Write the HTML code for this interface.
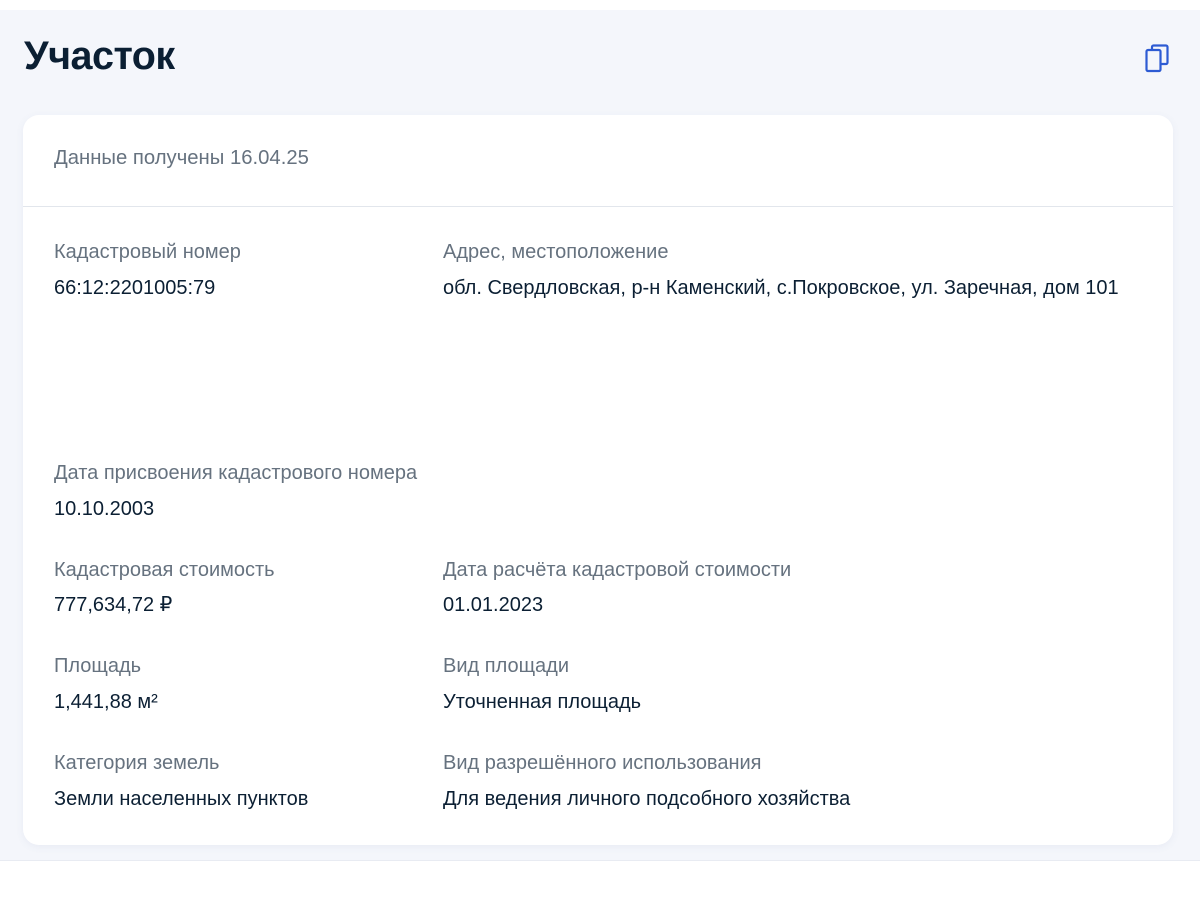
<!DOCTYPE html>
<html><head><meta charset="utf-8"><style>
html,body{margin:0;padding:0;background:#fff;width:1200px;height:900px;overflow:hidden}
body{font-family:"Liberation Sans","DejaVu Sans",sans-serif;position:relative}
.bg{position:absolute;left:0;top:10px;width:1200px;height:850px;background:#f4f6fb;border-bottom:1px solid #e8ebf2}
h1{position:absolute;left:24px;top:33px;margin:0;font-size:39.5px;font-weight:bold;color:#0b1f33;letter-spacing:-0.5px;line-height:46px}
.card{position:absolute;left:23px;top:115px;width:1150px;height:730px;background:#fff;border-radius:16px;box-shadow:0 2px 8px rgba(100,120,160,0.08)}
.hdr{position:absolute;left:31px;top:32px;font-size:20.3px;color:#66727f}
.div{position:absolute;left:0;right:0;top:91px;height:1px;background:#e2e6ec}
.t{position:absolute;font-size:20px;line-height:24px;white-space:nowrap}
.l{color:#66727f}.v{color:#0b1f33}
svg{position:absolute;left:1140px;top:40px}
</style></head><body>
<div class="bg"></div>
<h1>Участок</h1>
<svg width="34" height="36" viewBox="0 0 34 36" fill="none" stroke="#2d5bd3" stroke-width="2.2"><rect x="6.5" y="10" width="14" height="21" rx="1.5"/><path d="M12 10V7a1.5 1.5 0 0 1 1.5-1.5H26a1.5 1.5 0 0 1 1.5 1.5v15.5a1.5 1.5 0 0 1-1.5 1.5H20.5"/></svg>
<div class="card">
<div class="hdr">Данные получены 16.04.25</div>
<div class="div"></div>
</div>
<div class="t l" style="left:54px;top:240px">Кадастровый номер</div>
<div class="t v" style="left:54px;top:276px">66:12:2201005:79</div>
<div class="t l" style="left:443px;top:240px">Адрес, местоположение</div>
<div class="t v" style="left:443px;top:276px">обл. Свердловская, р-н Каменский, с.Покровское, ул. Заречная, дом 101</div>
<div class="t l" style="left:54px;top:461px">Дата присвоения кадастрового номера</div>
<div class="t v" style="left:54px;top:497px">10.10.2003</div>
<div class="t l" style="left:54px;top:558px">Кадастровая стоимость</div>
<div class="t v" style="left:54px;top:593px">777,634,72 ₽</div>
<div class="t l" style="left:443px;top:558px">Дата расчёта кадастровой стоимости</div>
<div class="t v" style="left:443px;top:593px">01.01.2023</div>
<div class="t l" style="left:54px;top:654px">Площадь</div>
<div class="t v" style="left:54px;top:690px">1,441,88 м²</div>
<div class="t l" style="left:443px;top:654px">Вид площади</div>
<div class="t v" style="left:443px;top:690px">Уточненная площадь</div>
<div class="t l" style="left:54px;top:751px">Категория земель</div>
<div class="t v" style="left:54px;top:787px">Земли населенных пунктов</div>
<div class="t l" style="left:443px;top:751px">Вид разрешённого использования</div>
<div class="t v" style="left:443px;top:787px">Для ведения личного подсобного хозяйства</div>
</body></html>
